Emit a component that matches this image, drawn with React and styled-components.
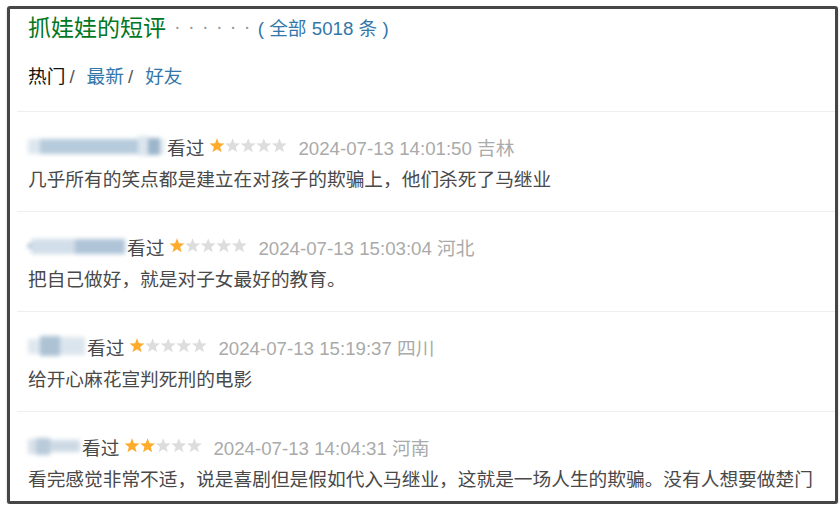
import React from 'react'
import styled, { createGlobalStyle } from 'styled-components'

const GlobalStyle = createGlobalStyle`
  body {
    margin: 0;
    background: #ffffff;
    font-family: "Liberation Sans", "Noto Sans CJK SC", sans-serif;
  }
`

const Frame = styled.div`
  box-sizing: border-box;
  width: 831px;
  height: 498px;
  margin: 6px 0 0 7px;
  border: 3px solid #464646;
  border-radius: 3px;
  background: #fff;
  overflow: hidden;
  box-shadow: 0 1px 2px rgba(0, 0, 0, 0.25);
`

const Header = styled.div`
  padding: 2px 0 0 18px;
`

const Title = styled.div`
  display: flex;
  align-items: center;
  height: 30px;
  font-size: 18.7px;
`

const TitleText = styled.span`
  font-size: 23px;
  color: #007722;
`

const Dots = styled.span`
  margin-left: 8px;
  font-size: 20px;
  color: #999999;
  letter-spacing: 7.3px;
`

const Total = styled.span`
  color: #3377aa;
  white-space: pre;
`

const Tabs = styled.div`
  display: flex;
  align-items: center;
  height: 28px;
  margin-top: 19px;
  font-size: 18.7px;
`

const Tab = styled.span`
  color: ${(p) => (p.$active ? '#111111' : '#3377aa')};
  margin-right: 12px;
`

const Slash = styled.span`
  color: #555;
  margin-left: 4px;
`

const List = styled.div`
  margin-top: 23px;
  margin-left: 7px;
`

const Item = styled.div`
  border-top: 1px solid #eeeeee;
  padding: 20px 0 17px 11px;
`

const Meta = styled.div`
  display: flex;
  align-items: center;
  height: 28px;
  font-size: 18.7px;
  color: #494949;
`

const Blur = styled.span`
  display: inline-flex;
  align-items: center;
  height: 18px;
  filter: blur(2px);
`

const BlurPart = styled.span`
  display: block;
  height: ${(p) => p.$h || 15}px;
  width: ${(p) => p.$w}px;
  background: ${(p) => p.$c};
`

const Watched = styled.span`
  margin-left: 2px;
`

const Stars = styled.svg`
  margin-left: 5px;
  display: block;
`

const Date = styled.span`
  margin-left: 10px;
  color: #aaaaaa;
`

const Comment = styled.div`
  margin-top: 6px;
  height: 28px;
  line-height: 28px;
  font-size: 18.7px;
  color: #494949;
  white-space: nowrap;
`

const starPath = (cx) => {
  const pts = []
  for (let i = 0; i < 10; i++) {
    const r = i % 2 === 0 ? 7.8 : 3.3
    const a = -Math.PI / 2 + (i * Math.PI) / 5
    pts.push(`${(cx + r * Math.cos(a)).toFixed(2)},${(8 + r * Math.sin(a)).toFixed(2)}`)
  }
  return pts.join(' ')
}

const Rating = ({ value }) => (
  <Stars width="79" height="16" viewBox="0 0 79 16">
    {[0, 1, 2, 3, 4].map((i) => (
      <polygon key={i} points={starPath(8 + i * 15.6)} fill={i < value ? '#ffac2d' : '#dddddd'} />
    ))}
  </Stars>
)

const reviews = [
  {
    name: [
      { w: 12, c: '#dde7ef' },
      { w: 98, c: '#b6cbdc' },
      { w: 10, c: '#dce6ee', h: 20 },
      { w: 12, c: '#9cb5cb', h: 17 },
      { w: 5, c: '#e6edf3' },
    ],
    stars: 1,
    date: '2024-07-13 14:01:50 吉林',
    text: '几乎所有的笑点都是建立在对孩子的欺骗上，他们杀死了马继业',
  },
  {
    name: [
      { w: 3, c: '#8fa8bd', h: 4 },
      { w: 44, c: '#d2dee9' },
      { w: 50, c: '#afc4d7' },
    ],
    stars: 1,
    date: '2024-07-13 15:03:04 河北',
    text: '把自己做好，就是对子女最好的教育。',
  },
  {
    name: [
      { w: 12, c: '#dfe8ef' },
      { w: 20, c: '#adc2d4', h: 20 },
      { w: 25, c: '#dbe5ed', h: 18 },
    ],
    stars: 1,
    date: '2024-07-13 15:19:37 四川',
    text: '给开心麻花宣判死刑的电影',
  },
  {
    name: [
      { w: 8, c: '#d7e1ea' },
      { w: 14, c: '#b9cad9', h: 17 },
      { w: 30, c: '#cddae6', h: 12 },
    ],
    stars: 2,
    date: '2024-07-13 14:04:31 河南',
    text: '看完感觉非常不适，说是喜剧但是假如代入马继业，这就是一场人生的欺骗。没有人想要做楚门',
  },
]

export default function App() {
  return (
    <>
      <GlobalStyle />
      <Frame>
        <Header>
          <Title>
            <TitleText>抓娃娃的短评</TitleText>
            <Dots>······</Dots>
            <Total>( 全部 5018 条 )</Total>
          </Title>
          <Tabs>
            <Tab $active>热门<Slash>/</Slash></Tab>
            <Tab>最新<Slash>/</Slash></Tab>
            <Tab>好友</Tab>
          </Tabs>
        </Header>
        <List>
          {reviews.map((r, i) => (
            <Item key={i}>
              <Meta>
                <Blur>
                  {r.name.map((p, j) => (
                    <BlurPart key={j} $w={p.w} $c={p.c} $h={p.h} />
                  ))}
                </Blur>
                <Watched>看过</Watched>
                <Rating value={r.stars} />
                <Date>{r.date}</Date>
              </Meta>
              <Comment>{r.text}</Comment>
            </Item>
          ))}
        </List>
      </Frame>
    </>
  )
}
